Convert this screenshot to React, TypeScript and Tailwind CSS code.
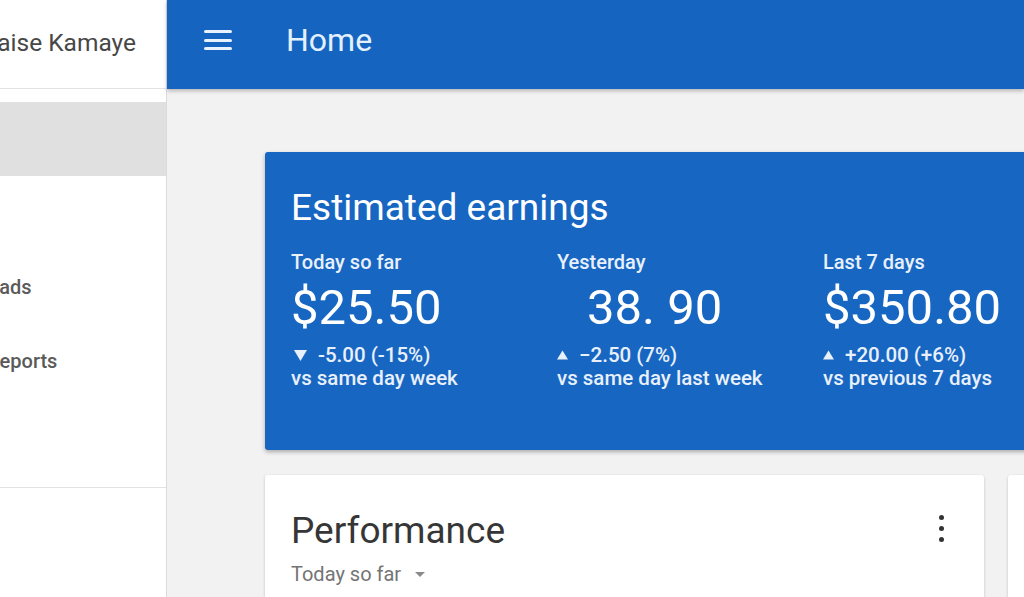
import React from 'react';

type Stat = {
  label: string;
  amount: string;
  indent?: boolean;
  up: boolean;
  delta: string;
  compare: string;
};

const stats: Stat[] = [
  { label: 'Today so far', amount: '$25.50', up: false, delta: '-5.00 (-15%)', compare: 'vs same day week' },
  { label: 'Yesterday', amount: '38. 90', indent: true, up: true, delta: '\u22122.50 (7%)', compare: 'vs same day last week' },
  { label: 'Last 7 days', amount: '$350.80', up: true, delta: '+20.00 (+6%)', compare: 'vs previous 7 days' },
];

const navItems = [
  { text: 'Home', active: true, offset: 'ml-[-80px]' },
  { text: 'Optimization', active: false, offset: 'ml-[-140px]' },
  { text: 'My ads', active: false, offset: 'ml-[-33px]' },
  { text: 'Reports', active: false, offset: 'ml-[-13px]' },
];

const Triangle: React.FC<{ up: boolean; className?: string }> = ({ up, className }) => (
  <svg viewBox="0 0 12 10" className={className} fill="currentColor">
    {up ? <path d="M6 0 L12 10 L0 10 Z" /> : <path d="M0 0 L12 0 L6 10 Z" />}
  </svg>
);

const StatColumn: React.FC<{ stat: Stat }> = ({ stat }) => (
  <div className="w-[266px] shrink-0">
    <div className="text-[20px] font-medium leading-[23px] text-[#e8f0fb]">{stat.label}</div>
    <div className={`mt-[8px] text-[49px] leading-[52px] text-white ${stat.indent ? 'pl-[30px]' : ''}`}>
      {stat.amount}
    </div>
    <div className="mt-[9px] flex items-center text-[20.5px] font-medium leading-[24px] text-[#e8f0fb]">
      <Triangle up={stat.up} className={`mr-[11px] ${stat.up ? 'h-[10px] w-[11px]' : 'ml-[3px] h-[11px] w-[13px]'}`} />
      {stat.delta}
    </div>
    <div className="text-[20.5px] font-medium leading-[23px] text-[#e8f0fb]">{stat.compare}</div>
  </div>
);

const App: React.FC = () => {
  return (
    <div className="flex h-[597px] w-[1024px] overflow-hidden bg-[#f2f2f2] font-['Roboto',sans-serif]">
      <aside className="z-10 flex w-[167px] shrink-0 flex-col overflow-hidden border-r border-[#dcdcdc] bg-white">
        <div className="flex h-[89px] shrink-0 items-center border-b border-[#e2e2e2] pb-[1px]">
          <span className="ml-[-24px] whitespace-nowrap text-[24.5px] text-[#474747]">Blaise Kamaye</span>
        </div>
        <nav className="mt-[13px] flex flex-col">
          {navItems.map((item) => (
            <div
              key={item.text}
              className={`flex h-[74px] items-center ${item.active ? 'bg-[#e0e0e0]' : ''}`}
            >
              <span className={`${item.offset} whitespace-nowrap text-[20px] font-medium text-[#5a5a5a]`}>
                {item.active || item.text === 'Optimization' ? '' : item.text}
              </span>
            </div>
          ))}
        </nav>
        <div className="mt-[89px] border-t border-[#e2e2e2]" />
      </aside>

      <div className="flex min-w-0 flex-1 flex-col">
        <header className="z-10 flex h-[89px] shrink-0 items-center bg-[#1565c0] pb-[9px] shadow-[0_2px_4px_rgba(0,0,0,0.25)]">
          <button className="ml-[37px] flex h-[24px] w-[30px] flex-col justify-between py-[2px]">
            <span className="block h-[3px] w-[28px] rounded-sm bg-[#e8f2ff]" />
            <span className="block h-[3px] w-[28px] rounded-sm bg-[#e8f2ff]" />
            <span className="block h-[3px] w-[28px] rounded-sm bg-[#e8f2ff]" />
          </button>
          <h1 className="ml-[52px] text-[32px] text-[#e3f0ff]">Home</h1>
        </header>

        <main className="flex-1 overflow-hidden pl-[98px] pt-[63px]">
          <section className="h-[298px] w-[820px] rounded-[3px] bg-[#1766c2] pl-[26px] pt-[34px] shadow-[0_2px_4px_rgba(0,0,0,0.3)]">
            <h2 className="text-[37px] leading-[43px] text-white">Estimated earnings</h2>
            <div className="mt-[22px] flex">
              {stats.map((s) => (
                <StatColumn key={s.label} stat={s} />
              ))}
            </div>
          </section>

          <div className="mt-[25px] flex gap-[24px]">
            <section className="h-[200px] w-[719px] shrink-0 rounded-[3px] bg-white pl-[26px] pt-[34px] shadow-[0_1px_3px_rgba(0,0,0,0.2)]">
              <div className="flex items-start justify-between pr-[40px]">
                <h2 className="text-[37px] leading-[43px] text-[#363636]">Performance</h2>
                <div className="mt-[6px] flex flex-col gap-[6px]">
                  <span className="block h-[5px] w-[5px] rounded-full bg-[#333]" />
                  <span className="block h-[5px] w-[5px] rounded-full bg-[#333]" />
                  <span className="block h-[5px] w-[5px] rounded-full bg-[#333]" />
                </div>
              </div>
              <div className="mt-[7px] flex items-center text-[20px] text-[#747474]">
                Today so far
                <svg viewBox="0 0 10 5" className="ml-[14px] h-[5px] w-[10px]" fill="#8a8a8a">
                  <path d="M0 0 L10 0 L5 5 Z" />
                </svg>
              </div>
            </section>
            <section className="h-[200px] w-[300px] shrink-0 rounded-[3px] bg-white shadow-[0_1px_3px_rgba(0,0,0,0.2)]" />
          </div>
        </main>
      </div>
    </div>
  );
};

export default App;
